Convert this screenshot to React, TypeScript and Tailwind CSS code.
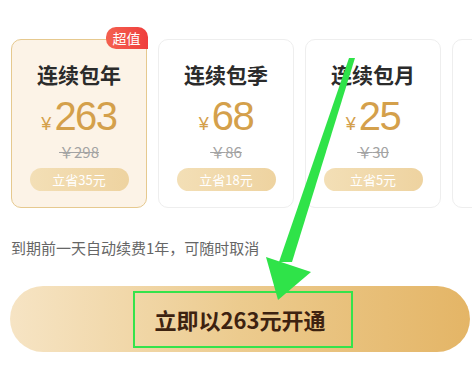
import React from "react";

interface Plan {
  title: string;
  price: string;
  original: string;
  save: string;
  active?: boolean;
}

const PLANS: Plan[] = [
  { title: "连续包年", price: "263", original: "298", save: "立省35元", active: true },
  { title: "连续包季", price: "68", original: "86", save: "立省18元" },
  { title: "连续包月", price: "25", original: "30", save: "立省5元" },
];

const FONT = { fontFamily: '"Noto Sans CJK SC", "Noto Sans", sans-serif' };

const PlanCard: React.FC<{ plan: Plan }> = ({ plan }) => (
  <div
    className={`relative shrink-0 w-[136px] h-[169px] rounded-[10px] flex flex-col items-center pt-[20px] ${
      plan.active
        ? "bg-[#fcf3e7] border-[1.5px] border-[#e6c98f]"
        : "bg-white border-[1.5px] border-[#eeeeee]"
    }`}
  >
    {plan.active && (
      <div className="absolute -top-[13px] -right-[1.5px] h-[22px] w-[42px] flex items-center justify-center bg-gradient-to-r from-[#f4604f] to-[#ef3d3d] text-white text-[14px] leading-none rounded-tl-[10px] rounded-tr-[10px] rounded-bl-[10px]">
        超值
      </div>
    )}
    <div className="text-[21px] leading-[28px] font-bold text-[#2b2b2b]">{plan.title}</div>
    <div
      className="mt-[6px] flex items-baseline text-[#d4a04b]"
      style={{ fontFamily: '"Liberation Sans", Arial, sans-serif' }}
    >
      <span className="text-[18px] mr-[3px]">¥</span>
      <span className="text-[40px] leading-[44px] tracking-[-1.5px]">{plan.price}</span>
    </div>
    <div className="mt-[4px] text-[15px] leading-[20px] text-[#a3a3a3] line-through">
      ￥{plan.original}
    </div>
    <div className="mt-[6px] w-[99px] h-[23px] rounded-full bg-gradient-to-r from-[#f3dfb6] to-[#eed3a0] flex items-center justify-center text-white text-[13px]">
      {plan.save}
    </div>
  </div>
);

export default function App() {
  return (
    <div className="relative w-[472px] h-[365px] overflow-hidden bg-white" style={FONT}>
      <div className="flex gap-[11px] pl-[11px] pt-[39px]">
        {PLANS.map((p) => (
          <PlanCard key={p.title} plan={p} />
        ))}
        <div className="shrink-0 w-[136px] h-[169px] rounded-[10px] bg-white border-[1.5px] border-[#eeeeee]" />
      </div>

      <div className="mt-[30px] pl-[11px] text-[15px] leading-[20px] text-[#666666]">
        到期前一天自动续费1年，可随时取消
      </div>

      <div className="mt-[28px] ml-[10px] mr-[2px] h-[66px] rounded-full bg-gradient-to-r from-[#f6e4c4] via-[#eccb8e] to-[#e4b566] flex items-center justify-center">
        <span className="text-[22px] font-bold text-[#3d2210]">立即以263元开通</span>
      </div>

      {/* annotation overlay */}
      <div className="absolute left-[133px] top-[291px] w-[220px] h-[57px] border-[2.5px] border-[#35e34b]" />
      <svg className="absolute inset-0 pointer-events-none" width="472" height="365" viewBox="0 0 472 365">
        <polygon points="349,58 355,58 292,262 279,262" fill="#2fe349" />
        <polygon points="266,257 311,272 278,300" fill="#2fe349" />
      </svg>
    </div>
  );
}
